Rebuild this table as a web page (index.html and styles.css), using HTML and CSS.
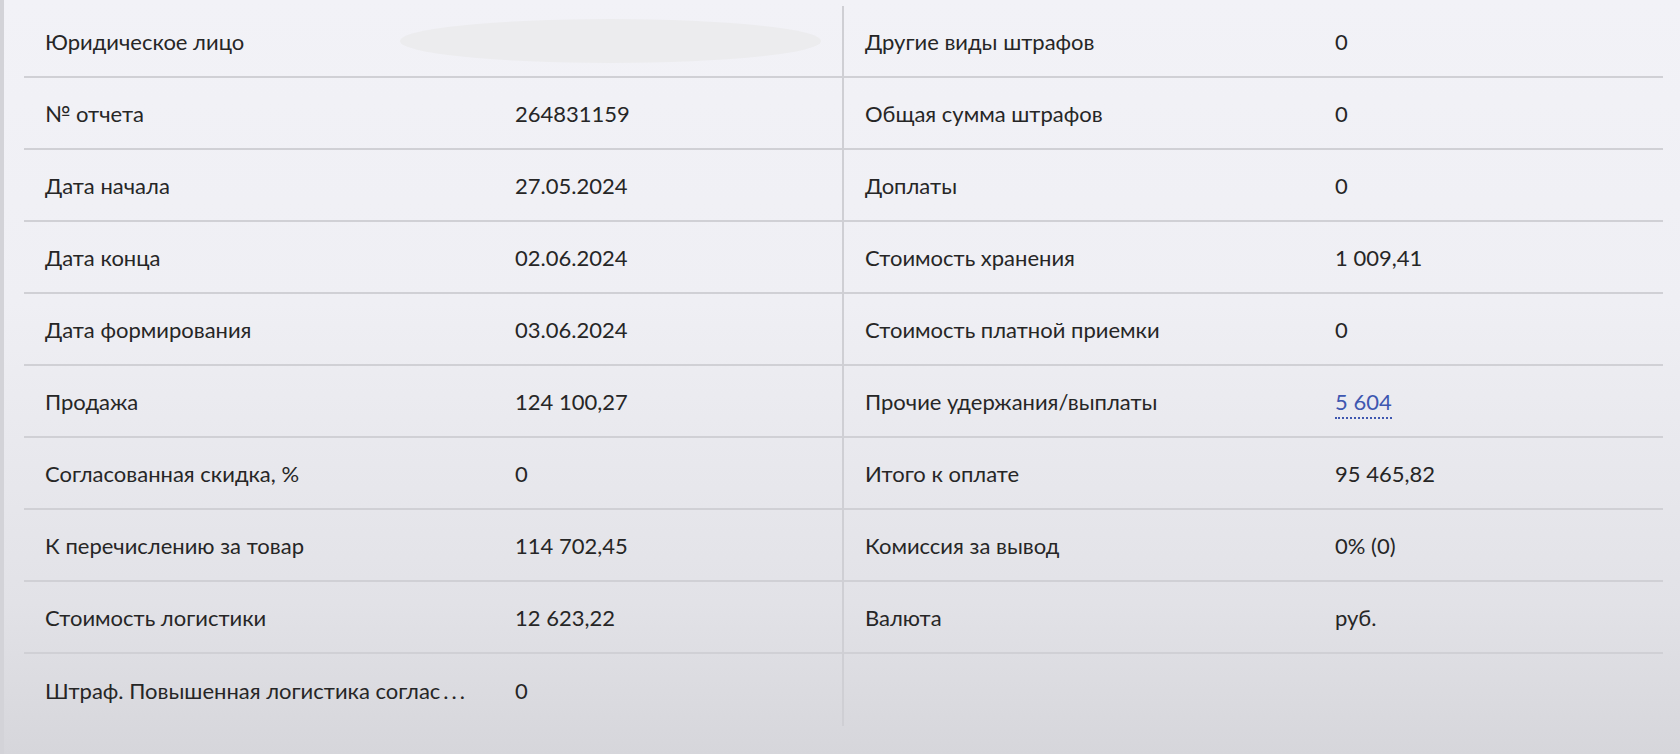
FILE: index.html
```html
<!DOCTYPE html>
<html>

<head>
    <meta charset="UTF-8">
    <title>Отчет</title>
    <link rel="stylesheet" href="styles.css">
</head>

<body>
    <div class="report">
        <div class="col col-left">
            <div class="row">
                <span class="label">Юридическое лицо</span>
                <span class="value"><span class="blur"></span></span>
            </div>
            <div class="row"><span class="label">№ отчета</span><span class="value">264831159</span></div>
            <div class="row"><span class="label">Дата начала</span><span class="value">27.05.2024</span></div>
            <div class="row"><span class="label">Дата конца</span><span class="value">02.06.2024</span></div>
            <div class="row"><span class="label">Дата формирования</span><span class="value">03.06.2024</span></div>
            <div class="row"><span class="label">Продажа</span><span class="value">124 100,27</span></div>
            <div class="row"><span class="label">Согласованная скидка, %</span><span class="value">0</span></div>
            <div class="row"><span class="label">К перечислению за товар</span><span class="value">114 702,45</span></div>
            <div class="row"><span class="label">Стоимость логистики</span><span class="value">12 623,22</span></div>
            <div class="row"><span class="label">Штраф. Повышенная логистика соглас<span class="dots">...</span></span><span class="value">0</span></div>
        </div>
        <div class="col col-right">
            <div class="row"><span class="label">Другие виды штрафов</span><span class="value">0</span></div>
            <div class="row"><span class="label">Общая сумма штрафов</span><span class="value">0</span></div>
            <div class="row"><span class="label">Доплаты</span><span class="value">0</span></div>
            <div class="row"><span class="label">Стоимость хранения</span><span class="value">1 009,41</span></div>
            <div class="row"><span class="label">Стоимость платной приемки</span><span class="value">0</span></div>
            <div class="row"><span class="label">Прочие удержания/выплаты</span><span class="value"><a class="link" href="#">5 604</a></span></div>
            <div class="row"><span class="label">Итого к оплате</span><span class="value">95 465,82</span></div>
            <div class="row"><span class="label">Комиссия за вывод</span><span class="value">0% (0)</span></div>
            <div class="row"><span class="label">Валюта</span><span class="value">руб.</span></div>
            <div class="row"></div>
        </div>
    </div>
</body>

</html>
```

FILE: styles.css
```css
* {
    margin: 0;
    padding: 0;
    box-sizing: border-box;
}

html,
body {
    height: 100%;
}

body {
    background: linear-gradient(to bottom, #f2f2f7 0%, #efeff4 40%, #e2e2e7 80%, #d6d6db 100%);
    border-left: 4px solid #d3d3d8;
    font-family: Lato, "Noto Sans", sans-serif;
    font-size: 22px;
    color: #262626;
}

.report {
    display: grid;
    grid-template-columns: 820px 819px;
    padding: 6px 17px 0 20px;
}

.col-left {
    border-right: 2px solid #cfcfd4;
}

.row {
    display: grid;
    grid-template-columns: 470px 1fr;
    align-items: center;
    height: 72px;
    padding-left: 21px;
    border-bottom: 2px solid #d0d0d5;
}

.row:last-child {
    border-bottom: none;
}

.label {
    white-space: nowrap;
}

.label .dots {
    margin-left: 3px;
    letter-spacing: 3px;
}

.value {
    white-space: nowrap;
    position: relative;
}

.blur {
    position: absolute;
    left: -115px;
    top: -22px;
    width: 421px;
    height: 44px;
    border-radius: 50%;
    background: #ececee;
}

.link {
    color: #3e57b0;
    text-decoration: none;
    border-bottom: 2px dotted #3e57b0;
    padding-bottom: 2px;
}
```
